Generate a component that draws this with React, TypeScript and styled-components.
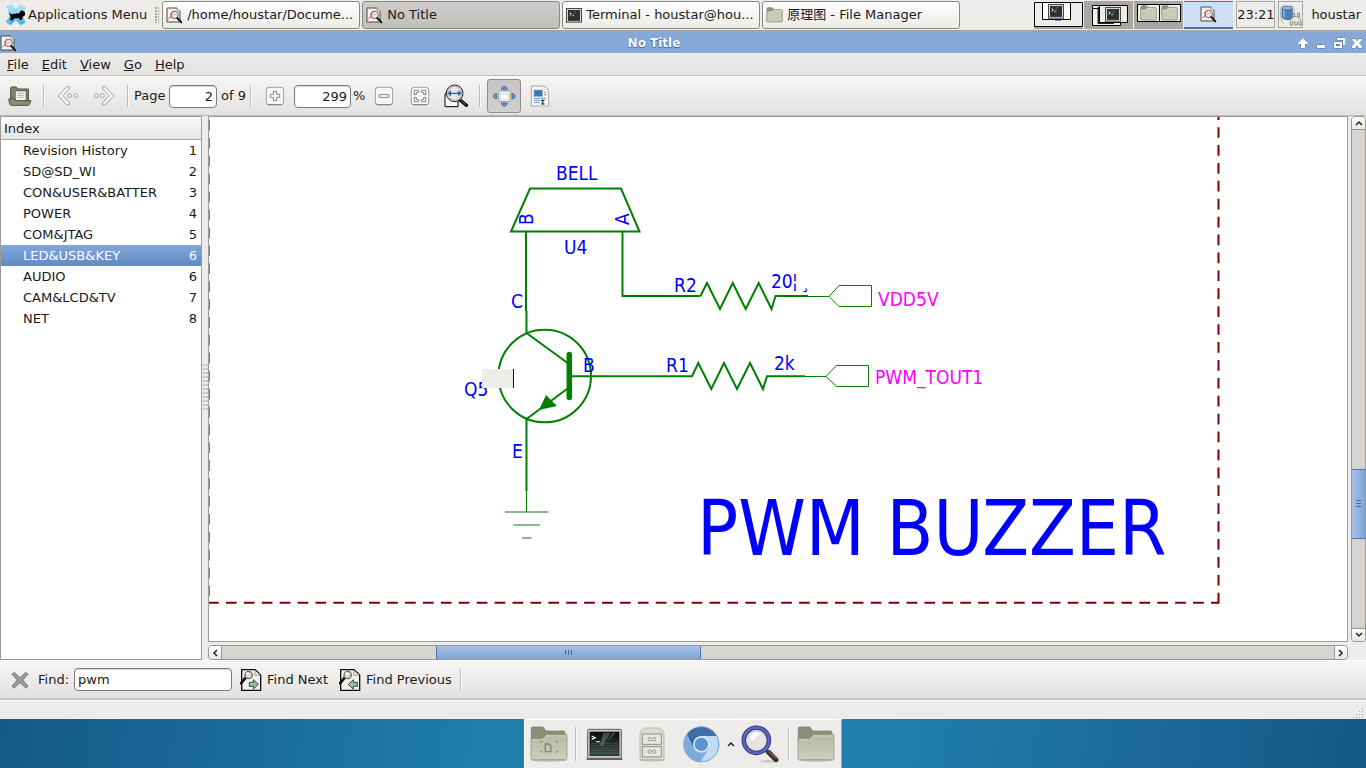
import React from 'react';
import styled, { createGlobalStyle, css } from 'styled-components';

const GlobalStyle = createGlobalStyle`
  *, *::before, *::after { box-sizing: border-box; }
  body { margin: 0; }
  body, button, input, table {
    font-family: "DejaVu Sans", "Noto Sans CJK SC", sans-serif;
    font-size: 13px;
    line-height: 16px;
    color: #1a1a1a;
  }
  button { padding: 0; border: 0; background: none; }
  svg { display: block; flex: none; }
`;

/* ---------- shared ---------- */

const Page = styled.div`
  display: flex;
  flex-direction: column;
  min-height: 100vh;
  background: #edeceb;
`;

const Spacer = styled.div`
  flex: 1;
`;

/* ---------- top panel ---------- */

const Panel = styled.header`
  display: flex;
  height: 31px;
  padding: 1px 5px 0;
  border-bottom: 1px solid #a9a39d;
  background: #edeceb;
`;

const MenuLauncher = styled.button`
  display: flex;
  align-items: center;
  gap: 2px;
  height: 28px;
  margin-right: 8px;
  white-space: nowrap;
`;

const PanelHandle = styled.div`
  width: 4px;
  height: 16px;
  margin: 6px 3px 0 0;
  background-image: radial-gradient(circle at 1px 1px, #aaa8a5 1px, transparent 1px);
  background-size: 3px 3px;
`;

const TaskList = styled.nav`
  display: flex;
  flex: 0 1 798px;
  gap: 2px;
  min-width: 0;
`;

const Task = styled.button<{ $active?: boolean }>`
  display: flex;
  align-items: center;
  gap: 4px;
  flex: 1 1 0;
  min-width: 0;
  height: 28px;
  padding: 0 3px;
  border: 1px solid #8c8a87;
  border-radius: 3px;
  white-space: nowrap;
  overflow: hidden;
  background: ${p => (p.$active ? 'linear-gradient(#cfcdcb, #c2c0be)' : 'linear-gradient(#ffffff, #ecebea)')};
`;

const Pager = styled.div`
  display: flex;
  gap: 1px;
`;

const Workspace = styled.button<{ $current?: boolean; $first?: boolean }>`
  display: flex;
  align-items: center;
  justify-content: center;
  width: 49px;
  height: 28px;
  background: ${p => (p.$current ? '#cfe0f6' : p.$first ? '#edeceb' : '#a9a5a2')};
  ${p => p.$current && css`border-bottom: 2px solid #4a73ad; border-top: 1px solid #4a73ad;`}
`;

const Inset = styled.div<{ $width: number }>`
  display: flex;
  align-items: center;
  justify-content: center;
  width: ${p => p.$width}px;
  height: 27px;
  margin-left: 3px;
  border: 1px solid #a9a7a4;
`;

const UserButton = styled.button`
  height: 28px;
  margin-left: 8px;
`;

/* ---------- window frame ---------- */

const TitleBar = styled.div`
  display: flex;
  align-items: center;
  height: 22px;
  padding: 2px 3px 0 0;
  background: #86a9d8;
`;

const Title = styled.h1`
  flex: 1;
  margin: 0;
  padding-right: 6px;
  font-size: 12px;
  line-height: 20px;
  text-align: center;
  color: #fff;
  text-shadow: 0 0 1px #3f6198, 0 1px 1px #3f6198;
`;

const FrameButtons = styled.div`
  display: flex;
  gap: 6px;
`;

const MenuBar = styled.nav`
  display: flex;
  height: 23px;
  padding-left: 7px;
  gap: 13px;
  border-bottom: 1px solid #bfbebc;
  background: linear-gradient(#edeceb, #e4e3e1);
`;

const MenuItem = styled.button`
  height: 22px;
  padding-top: 2px;
  &::first-letter { text-decoration: underline; }
`;

const bar = css`
  display: flex;
  align-items: center;
  height: 40px;
  border-top: 1px solid #fff;
  border-bottom: 1px solid #bab9b7;
  background: linear-gradient(#f6f5f4, #e3e2e0);
`;

const Toolbar = styled.div`
  ${bar}
  padding-left: 2px;
`;

const ToolButton = styled.button<{ $pressed?: boolean }>`
  display: flex;
  align-items: center;
  justify-content: center;
  width: 34px;
  height: 34px;
  margin: 0 1px;
  border: 1px solid ${p => (p.$pressed ? '#8f8c89' : 'transparent')};
  border-radius: 3px;
  background: ${p => (p.$pressed ? 'linear-gradient(#c8c4c1, #d2cfcc)' : 'none')};
`;

const Separator = styled.div<{ $height: number }>`
  flex: none;
  width: 2px;
  height: ${p => p.$height}px;
  margin: 0 5px;
  border-left: 1px solid #bebcba;
  border-right: 1px solid #fbfbfa;
`;

const Field = styled.input<{ $width: number; $right?: boolean }>`
  width: ${p => p.$width}px;
  height: 23px;
  padding: 0 3px;
  border: 1px solid #7f7b78;
  border-radius: 4px;
  outline: 0;
  background: #fff;
  box-shadow: inset 0 1px 1px #d8d6d4;
  text-align: ${p => (p.$right ? 'right' : 'left')};
`;

const PageLabel = styled.label`
  width: 35px;
`;

const PageCount = styled.span`
  width: 28px;
  padding-left: 4px;
  white-space: nowrap;
`;

const Percent = styled.label`
  width: 15px;
  padding-left: 2px;
`;

const ZoomField = styled(Field)`
  margin-left: 1px;
`;

/* ---------- work area ---------- */

const Work = styled.main`
  display: grid;
  grid-template-columns: 202px 6px minmax(0, 1fr) 18px;
  grid-template-rows: minmax(300px, 1fr) 18px;
  flex: 1;
`;

const Sidebar = styled.aside`
  grid-row: 1 / 3;
  border: 1px solid #9f9b98;
  background: #fff;
`;

const Outline = styled.table`
  width: 100%;
  border-collapse: separate;
  border-spacing: 0;
  th, td { padding: 0; font-weight: normal; text-align: left; }
  th {
    height: 23px;
    padding: 1px 0 0 3px;
    border-bottom: 1px solid #a8a6a4;
    background: linear-gradient(#fbfbfa, #f0efee 50%, #e6e5e3);
  }
  td { height: 21px; padding-left: 22px; }
  td:last-child { width: 40px; padding: 0 4px 0 0; text-align: right; }
`;

const OutlineRow = styled.tr<{ $selected?: boolean }>`
  ${p => p.$selected && css`
    background: linear-gradient(#83a7da, #5f8ac4);
    color: #fff;
  `}
`;

const Divider = styled.div`
  grid-row: 1 / 3;
  display: flex;
  align-items: center;
  justify-content: center;
  &::before {
    content: "";
    width: 5px;
    height: 48px;
    background-image: radial-gradient(circle at 1px 1px, #c4c2bf 1px, transparent 1px);
    background-size: 3px 4px;
  }
`;

const Document = styled.section`
  min-width: 0;
  border: 1px solid #9f9b98;
  background: #fff;
  overflow: hidden;
`;

const Scroll = styled.div<{ $vertical?: boolean }>`
  display: flex;
  flex-direction: ${p => (p.$vertical ? 'column' : 'row')};
  margin: ${p => (p.$vertical ? '0 0 0 3px' : '3px 0 0')};
  border: 1px solid #989592;
  border-radius: 4px;
  background: #d5d4d1;
  overflow: hidden;
`;

const ScrollArrow = styled.button<{ $side: string }>`
  display: flex;
  align-items: center;
  justify-content: center;
  width: 13px;
  height: 13px;
  background: linear-gradient(#fff, #e9e8e6);
  border-${p => p.$side}: 1px solid #989592;
`;

const Track = styled.div<{ $grow: number }>`
  flex: ${p => p.$grow} 1 0;
`;

const Thumb = styled.div<{ $vertical?: boolean; $grow: number }>`
  flex: ${p => p.$grow} 1 0;
  display: flex;
  align-items: center;
  justify-content: center;
  outline: 1px solid #5278ae;
  background: linear-gradient(${p => (p.$vertical ? '90deg' : '180deg')}, #a6c4ea, #7da3d6);
  &::before {
    content: "";
    width: 5px;
    height: 7px;
    ${p => p.$vertical
      ? 'background: repeating-linear-gradient(#47689a 0 1px, transparent 1px 3px);'
      : 'width: 7px; height: 5px; background: repeating-linear-gradient(90deg, #47689a 0 1px, transparent 1px 3px);'}
  }
`;

/* ---------- find bar, status bar, desktop ---------- */

const FindBar = styled.form`
  ${bar}
  border-bottom: 2px solid #c2c1bf;
  padding-left: 11px;
`;

const FindLabel = styled.label`
  width: 36px;
  margin-left: 9px;
`;

const FindButton = styled.button`
  display: flex;
  align-items: center;
  gap: 5px;
  height: 32px;
  margin-left: 8px;
  margin-right: 3px;
  white-space: nowrap;
`;

const StatusBar = styled.footer`
  display: flex;
  justify-content: flex-end;
  align-items: flex-end;
  height: 19px;
  padding: 0 1px 1px;
  border-top: 1px solid #fff;
`;

const Desktop = styled.div`
  display: flex;
  justify-content: center;
  height: 49px;
  background: linear-gradient(100deg, #145a87, #207dac 36%, #217fae 64%, #1a6594 88%, #135885);
`;

const Dock = styled.nav`
  display: flex;
  align-items: center;
  width: 318px;
  padding-left: 5px;
  border: 1px solid #fff;
  border-bottom: 0;
  border-right-color: #8fa9b5;
  background: #edeceb;
`;

const DockSeparator = styled(Separator)`
  margin: 0 7px;
`;

const DockButton = styled.button<{ $width: number }>`
  display: flex;
  align-items: center;
  justify-content: center;
  width: ${p => p.$width}px;
  height: 48px;
`;

/* ---------- icons ---------- */

const XfceIcon = () => (
  <svg width="21" height="22" viewBox="0 0 63 66">
    <defs>
      <linearGradient id="xf" x1="0" y1="0" x2="0" y2="1">
        <stop offset="0" stopColor="#b9ebfa" /><stop offset="1" stopColor="#37b3e6" />
      </linearGradient>
    </defs>
    <path d="M6 8 L20 4 L32 18 L46 3 L61 11 L48 32 L62 54 L48 64 L32 48 L18 64 L3 54 L17 32Z" fill="url(#xf)" stroke="#74c6e4" strokeWidth="2" />
    <path d="M10 24 L18 31 L42 28 L50 18 L53 22 L58 21 L61 32 L54 38 L50 48 L44 48 L43 43 L28 43 L22 50 L15 48 L17 38 Z" fill="#050505" />
  </svg>
);

const DocIcon = () => (
  <svg width="17" height="17" viewBox="0 0 51 51">
    <path d="M3 3 H33 L42 12 V45 H3Z" fill="#f4f3f2" stroke="#4a4745" strokeWidth="3" />
    <path d="M33 3 V12 H42" fill="#fff" stroke="#777" strokeWidth="2" />
    <path d="M8 35 L15 30 L20 12 M12 22 L20 18" stroke="#e23a3a" strokeWidth="3" fill="none" />
    <circle cx="26" cy="24" r="11" fill="#f3e9e8" fillOpacity=".85" stroke="#696562" strokeWidth="3" />
    <path d="M19 28 L25 21 L32 24" stroke="#ee7777" strokeWidth="2" fill="none" />
    <path d="M34 33 L46 46" stroke="#151515" strokeWidth="6" strokeLinecap="round" />
  </svg>
);

const TerminalIcon = () => (
  <svg width="16" height="15" viewBox="0 0 48 45">
    <rect x="1.5" y="1.5" width="45" height="41" fill="#d6d8d3" stroke="#454844" strokeWidth="3" />
    <rect x="7" y="7" width="34" height="30" fill="#2a302d" stroke="#151816" strokeWidth="2" />
    <path d="M24 8 L18 30 L33 8Z" fill="#5a615e" opacity=".6" />
    <path d="M11 14 L16 18 L11 22" stroke="#fff" strokeWidth="3" fill="none" />
    <path d="M18 23 H25" stroke="#ddd" strokeWidth="2" />
  </svg>
);

const SmallFolder = () => (
  <svg width="17" height="16" viewBox="0 0 51 48">
    <path d="M3 14 V6 Q3 2 7 2 H17 Q20 2 21 5 L23 9 H44 V14Z" fill="#8f927e" stroke="#74775f" strokeWidth="2" />
    <path d="M2 13 H16 L21 8 H47 Q49 8 49 11 V42 Q49 45 46 45 H5 Q2 45 2 42Z" fill="#c9cab7" stroke="#7f826c" strokeWidth="2" />
    <path d="M5 15 H17 L22 11 H46" stroke="#e8e9dd" strokeWidth="2" fill="none" />
  </svg>
);

const MiniDesk = ({ kind }: { kind: 'one' | 'two' | 'folders' }) => (
  <svg width="49" height="28" viewBox="0 0 49 28">
    {kind === 'one' && (
      <>
        <path d="M.5 1.5H48.5V25.5H.5Z" fill="#edeceb" stroke="#000" />
        <path d="M0 27H49" stroke="#a9a5a2" strokeWidth="2" />
        <path d="M8.5 1.5H36.5V18.5H8.5Z" fill="#fff" stroke="#000" />
        <path d="M21 19.5H27" stroke="#5b93dc" />
        <g transform="translate(14 3)"><TerminalIcon /></g>
      </>
    )}
    {kind === 'two' && (
      <>
        <path d="M8.500 4.500H36.500V24.500H8.500Z" fill="#f4f4f2" stroke="#000" />
        <path d="M8.500 7.500H14" stroke="#000" />
        <path d="M14.500 6V22H30" stroke="#222" strokeWidth="2" fill="none" />
        <path d="M15.500 4.500H43.500V21.500H15.500Z" fill="#edeceb" stroke="#000" />
        <g transform="translate(21 6)"><TerminalIcon /></g>
      </>
    )}
    {kind === 'folders' && (
      <>
        <path d="M3.5 3.5H46.5V20.5H3.5Z M25.5 3.5V20.5" fill="#edeceb" stroke="#000" />
        <g transform="translate(6 4)"><SmallFolder /></g>
        <g transform="translate(27 4)"><SmallFolder /></g>
      </>
    )}
  </svg>
);

const NetIcon = () => (
  <svg width="23" height="24" viewBox="0 0 69 72">
    <path d="M14 8 Q3 10 5 26 L5 44 Q7 59 15 62" fill="none" stroke="#b5b5b3" strokeWidth="3" />
    <path d="M34 8 Q46 10 47 26" fill="none" stroke="#b5b5b3" strokeWidth="3" />
    <path d="M9 15 V44 Q25 56 40 44 V15Z" fill="#527fb8" stroke="#2e578b" strokeWidth="2" />
    <path d="M15 19 V44" stroke="#8db0dc" strokeWidth="5" />
    <ellipse cx="24.500" cy="15" rx="15.500" ry="6" fill="#8fb2df" stroke="#2e578b" strokeWidth="2" />
    <g fill="#e8e8e6" stroke="#8b8b88" strokeWidth="3">
      <path d="M42 30 H47 V42 H42Z M56 30 H61 V42 H56Z" />
      <path d="M34 66 V56 Q36 41 52 40 Q66 42 67 66 H60 V57 H55 V66 H48 V57 H41 V66Z" />
    </g>
  </svg>
);

const frameGlyphs = {
  shade: 'M6 1 L1 6 V7 H4 V11 H8 V7 H11 V6Z',
  minimise: 'M2 8H10V11H2Z',
  restore: 'M4 1H12V8H10V3H4Z M1 5H9V11H1Z M3 7V9H7V7Z',
  close: 'M1 2H4L6 4L8 2H11V3L8 6L11 9V11H8L6 8L4 11H1V9L4 6L1 3Z',
};

const FrameGlyph = ({ d }: { d: string }) => (
  <svg width="12" height="12" viewBox="0 0 12 12">
    <path d={d} fill="#fff" fillRule="evenodd" stroke="#56779f" strokeWidth="1" paintOrder="stroke" />
  </svg>
);

const OpenIcon = () => (
  <svg width="24" height="20" viewBox="0 0 72 60">
    <path d="M8 44 V7 Q8 3 12 3 H25 L30 9 H61 V44Z" fill="#80806d" stroke="#4f5042" strokeWidth="3" />
    <path d="M22 15 H54 V46 H22Z" fill="#f6f6f4" stroke="#5c5d50" strokeWidth="2" />
    <path d="M28 22 H48 M28 28 H48 M28 34 H48" stroke="#b4b4ae" strokeWidth="3" />
    <path d="M2 39 H18 L24 44 H69 L64 56 Q63 58 60 58 H10 Q7 58 6 56Z" fill="#8c8d79" stroke="#4f5042" strokeWidth="3" />
  </svg>
);

const ArrowIcon = ({ forward }: { forward?: boolean }) => (
  <svg width="22" height="20" viewBox="0 0 66 60">
    <g transform={forward ? 'translate(66 0) scale(-1 1)' : undefined} fill="#f3f2f1" stroke="#979593" strokeWidth="2.500">
      <path d="M29 2 H37 V9 L18 29 L37 50 V57 H30 L3 30Z" />
      <circle cx="38" cy="29" r="6" />
      <circle cx="56" cy="29" r="6" />
    </g>
  </svg>
);

const SquareIcon = ({ kind }: { kind: 'plus' | 'minus' | 'fit' }) => (
  <svg width="20" height="20" viewBox="0 0 60 60">
    <rect x="4" y="4" width="52" height="52" rx="8" fill="#f7f6f5" stroke="#a3a19f" strokeWidth="3" />
    <path d="M8 56 H52" stroke="#81807e" strokeWidth="3" />
    <g fill="#fff" stroke="#858381" strokeWidth="3">
      {kind === 'plus' && <path d="M25 16 H35 V25 H44 V34 H35 V44 H25 V34 H16 V25 H25Z" />}
      {kind === 'minus' && <path d="M15 26 H45 V34 H15Z" />}
      {kind === 'fit' && <path d="M13 13 H26 V19 H19 V26 H13Z M34 13 H47 V26 H41 V19 H34Z M13 34 H19 V41 H26 V47 H13Z M41 34 H47 V47 H34 V41 H41Z" />}
    </g>
  </svg>
);

const FitWidthIcon = () => (
  <svg width="24" height="24" viewBox="0 0 72 72">
    <path d="M3 68 V31 L12 18 H42 V68Z" fill="#fbfbfa" stroke="#000" strokeWidth="3" />
    <path d="M48 48 L67 64" stroke="#000" strokeWidth="10" strokeLinecap="round" />
    <path d="M50 49 L65 62" stroke="#777" strokeWidth="3" />
    <circle cx="32" cy="28" r="25" fill="#e4e6e6" stroke="#171717" strokeWidth="3" />
    <circle cx="32" cy="28" r="21" fill="none" stroke="#b9bdbd" strokeWidth="4" />
    <path d="M11 28 L21 19 V26 H43 V19 L53 28 L43 37 V30 H21 V37Z" fill="#2f5c92" />
  </svg>
);

const PanIcon = () => (
  <svg width="24" height="22" viewBox="0 0 72 66">
    <rect x="20" y="18" width="35" height="32" rx="4" fill="#f3f4f1" stroke="#999c92" strokeWidth="3" />
    <path d="M26 27 H49 V44 H26Z" fill="#fff" stroke="#c5c7bf" strokeWidth="2" />
    <g fill="#6993cb" stroke="#2f5b93" strokeWidth="2">
      <path d="M28 13 Q29 4 37 4 Q45 4 46 13Z" />
      <path d="M28 54 H46 Q44 64 37 64 Q30 64 28 54Z" />
      <path d="M14 25 V42 Q4 41 4 34 Q4 26 14 25Z" />
      <path d="M60 25 Q70 27 70 34 Q70 41 60 42Z" />
    </g>
  </svg>
);

const TextSelectIcon = () => (
  <svg width="20" height="22" viewBox="0 0 60 66">
    <path d="M4 3 H37 Q57 5 56 25 V63 H4Z" fill="#f5f5f4" stroke="#a8aaa8" strokeWidth="3" />
    <rect x="12" y="15" width="25" height="19" fill="#3e73ad" stroke="#8bb0d8" strokeWidth="2" />
    <path d="M42 22 H48 M42 29 H50 M12 40 H48 M12 46 H30 M12 52 H29" stroke="#689aca" strokeWidth="3" />
    <rect x="30" y="43" width="17" height="18" fill="#fff" />
    <path d="M33 46 H44 M38.500 46 V57 M33 57 H44" stroke="#111" strokeWidth="3" />
  </svg>
);

const CloseIcon = () => (
  <svg width="18" height="18" viewBox="0 0 54 54">
    <path d="M9 4 L27 20 L45 4 L51 10 L35 27 L51 45 L45 51 L27 35 L9 51 L3 45 L19 27 L3 10Z" fill="#9a9c98" stroke="#777975" strokeWidth="3" strokeLinejoin="round" />
  </svg>
);

const FindIcon = ({ back }: { back?: boolean }) => (
  <svg width="22" height="24" viewBox="0 0 66 72">
    <path d="M5 5 H45 L62 21 V67 H5Z" fill="#f1f1ef" stroke="#111" strokeWidth="4" />
    <path d="M44 6 V22 H61" fill="#e0e0dd" stroke="#8a8a87" strokeWidth="2" />
    <path d="M17 29 L3 46" stroke="#111" strokeWidth="8" strokeLinecap="round" />
    <circle cx="26" cy="21" r="11" fill="#ddd9ce" stroke="#6d6b63" strokeWidth="4" />
    <circle cx="23" cy="17" r="4" fill="#fff" />
    <path transform={back ? 'translate(83 0) scale(-1 1)' : undefined} d="M28 43 H40 V35 L55 49 L40 63 V55 H28Z" fill="#9cbd9f" stroke="#304f35" strokeWidth="3" />
  </svg>
);

const Chevron = ({ turn = 0 }: { turn?: number }) => (
  <svg width="8" height="8" viewBox="0 0 8 8">
    <path d="M1 6 L4 3 L7 6" transform={`rotate(${turn} 4 4)`} fill="none" stroke="#222" strokeWidth="1.500" />
  </svg>
);

const BigFolder = ({ documents }: { documents?: boolean }) => (
  <svg width="38" height="36" viewBox="0 0 114 108">
    <defs>
      <linearGradient id="folder" x1="0" y1="0" x2="0" y2="1">
        <stop offset="0" stopColor="#b6b8a1" /><stop offset="1" stopColor="#ced0bd" />
      </linearGradient>
    </defs>
    <ellipse cx="57" cy="103" rx="54" ry="4" fill="#bbb9b4" />
    <path d="M4 50 V7 Q4 3 8 3 H36 Q40 3 42 7 L47 15 H100 Q105 15 105 20 V50Z" fill="#8c8f78" stroke="#73765f" strokeWidth="2" />
    <path d="M3 38 H35 Q39 38 42 34 L46 28 Q48 25 52 25 H107 Q111 25 111 29 V97 Q111 101 107 101 H7 Q3 101 3 97Z" fill="url(#folder)" stroke="#868970" strokeWidth="2" />
    <path d="M6 41 H36 Q41 41 45 36 L49 30 H108" stroke="#daddcd" strokeWidth="2" fill="none" />
    {documents && (
      <g fill="none" stroke="#84876f" strokeWidth="3">
        <path d="M46 54 H56 L63 61 V77 H46Z" strokeWidth="4" />
        <path d="M32 51 V46 H38 M77 46 H83 V51 M32 73 V78 H38 M77 78 H83 V73" />
      </g>
    )}
  </svg>
);

const BigTerminal = () => (
  <svg width="37" height="33" viewBox="0 0 111 99">
    <defs>
      <linearGradient id="screen" x1="0" y1="0" x2="0" y2="1">
        <stop offset="0" stopColor="#070a09" /><stop offset="1" stopColor="#3f504b" />
      </linearGradient>
    </defs>
    <path d="M2 91 H109 V96 H2Z" fill="#5c5e5b" />
    <rect x="5" y="4" width="101" height="87" rx="3" fill="#c9cbc8" stroke="#5e615d" strokeWidth="3" />
    <rect x="12" y="12" width="87" height="71" fill="url(#screen)" stroke="#111" strokeWidth="2" />
    <path d="M52 14 H74 L50 55 L42 52Z M79 14 H90 L62 42Z" fill="#8a9491" opacity=".45" />
    <path d="M14 46 H98 M14 53 H98 M14 60 H98 M14 67 H98 M14 74 H98" stroke="#65756f" strokeWidth="1" />
    <path d="M17 24 L27 29 L17 34" fill="none" stroke="#fff" strokeWidth="4" />
    <path d="M30 41 H42" stroke="#ddd" strokeWidth="3" />
  </svg>
);

const CabinetIcon = () => (
  <svg width="26" height="35" viewBox="0 0 78 105">
    <ellipse cx="39" cy="100" rx="38" ry="4" fill="#c5c4c0" />
    <path d="M3 18 Q4 13 8 10 L17 3 H61 L70 10 Q75 13 75 18 V98 H3Z" fill="#dcdcd8" stroke="#a3a39f" strokeWidth="2" />
    <g fill="#e6e6e3" stroke="#8f8f8b" strokeWidth="3">
      <rect x="10" y="21" width="57" height="31" />
      <rect x="10" y="59" width="57" height="31" />
    </g>
    <g fill="#fff" stroke="#8c8c88" strokeWidth="2.500">
      <path d="M28 32 V41 H49 V32 H43 V36 H34 V32Z" />
      <path d="M28 69 V78 H49 V69 H43 V73 H34 V69Z" />
    </g>
  </svg>
);

const ChromiumIcon = () => (
  <svg width="37" height="37" viewBox="0 0 111 111">
    <circle cx="55" cy="55" r="53" fill="#7fabdc" />
    <path d="M55 55 L12 24 A53 53 0 0 1 100 29Z" fill="#3f6fa8" />
    <path d="M55 30 H100 A53 53 0 0 1 52 108 L78 67Z" fill="#c1dbf3" />
    <path d="M12 24 L33 67 L55 55Z" fill="#33619b" />
    <circle cx="55" cy="55" r="25" fill="#dceaf8" />
    <circle cx="55" cy="55" r="20" fill="#5d93d3" />
    <circle cx="55" cy="55" r="53" fill="none" stroke="#6a94c4" strokeWidth="2" />
  </svg>
);

const MagnifierIcon = () => (
  <svg width="38" height="38" viewBox="0 0 114 114">
    <ellipse cx="83" cy="109" rx="26" ry="4" fill="#c8c6c3" />
    <path d="M71 73 L82 83" stroke="#a8a8a8" strokeWidth="9" />
    <path d="M83 82 L105 104" stroke="#3d3029" strokeWidth="15" strokeLinecap="round" />
    <path d="M84 80 L106 100" stroke="#806a59" strokeWidth="4" strokeLinecap="round" />
    <circle cx="46" cy="46" r="38" fill="#d9d7da" stroke="#2b2f7a" strokeWidth="13" />
    <circle cx="46" cy="46" r="38" fill="none" stroke="#5c66bd" strokeWidth="8" />
    <circle cx="47" cy="48" r="28" fill="#e6e4e3" />
    <path d="M29 38 Q34 20 51 22 Q60 24 53 31 Q43 35 40 45 Q31 49 29 38Z" fill="#fff" />
  </svg>
);

const Grip = () => (
  <svg width="12" height="11" viewBox="0 0 12 11">
    <path d="M9 1.500h1M6 4.500h1M9 4.500h1M3 7.500h1M6 7.500h1M9 7.500h1M0 10.500h1M3 10.500h1M6 10.500h1M9 10.500h1" stroke="#a5a3a0" strokeWidth="1" />
  </svg>
);

/* ---------- schematic ---------- */

const Sheet = styled.svg`
  width: 100%;
  height: 100%;
  text {
    font-family: "DejaVu Sans Condensed", "DejaVu Sans", sans-serif;
    font-size: 19px;
    fill: #0000ff;
  }
  .net { fill: #ff00ff; }
  .heading { font-size: 76px; }
  .wire { fill: none; stroke: #008000; stroke-width: 2; }
  .thin { fill: none; stroke: #008000; stroke-width: 1; }
  .border { fill: none; stroke: #800000; stroke-width: 2; stroke-dasharray: 10.7 7.21; }
`;

const Schematic = () => (
  <Sheet role="img" aria-label="PWM buzzer schematic">
    <g transform="translate(-209 -117)">
      <path className="border" d="M1218.500 603.500 V100" />
      <path className="border" strokeDashoffset="2.700" d="M1219 602.700 H200" />
      <path d="M209 120 V603" fill="none" stroke="#800000" strokeOpacity=".6" strokeWidth="2" strokeDasharray="10.700 7.210" />

      <path className="wire" d="M530 188.500 H621 L639.500 231.500 H511Z" />
      <path className="wire" d="M526 231 V311 M526.500 311 V333 M622.500 231 V296 H700.500" />
      <path className="wire" d="M700.500 296 L707 283 L720 309 L732.700 283 L745.700 309 L758.700 283 L771.500 309 L775.500 296 H808" />
      <path className="thin" d="M808 296.500 H829 L839 285.500 H871.500 V306.500 H839 L829 296.500" />
      <path className="wire" d="M570 376.300 H692 L698.300 363 L711.300 389 L724 363 L737 389 L750 363 L763 389 L767 376.300 H805" />
      <path className="thin" d="M805 376.500 H826 L836.500 365.500 H868.500 V386.500 H836.500 L826 376.500" />

      <circle className="wire" cx="544.700" cy="376" r="46.300" />
      <path className="wire" d="M526.500 333 L569 364 M569 387.500 L526.500 419 V491" />
      <path d="M569.300 354.500 V397.500" stroke="#008000" strokeWidth="5.500" strokeLinecap="round" />
      <path d="M546 395 L557 406 L539 410Z" fill="#008000" />
      <path className="thin" d="M526.500 491 V512 M505 512 H548.500 M513.500 525 H540 M522 538 H531.500" />

      <text x="556" y="180">BELL</text>
      <text x="564" y="254">U4</text>
      <text transform="translate(533 225) rotate(-90)">B</text>
      <text transform="translate(629 225) rotate(-90)">A</text>
      <text x="511" y="308">C</text>
      <text x="583" y="372">B</text>
      <text x="464" y="396">Q5</text>
      <text x="512" y="458">E</text>
      <text x="674" y="292">R2</text>
      <text x="666" y="372">R1</text>
      <text x="771" y="288">20</text>
      <text x="792" y="288">¦</text>
      <text x="801" y="288">¸</text>
      <text x="774" y="370">2k</text>
      <text className="net" x="878" y="306">VDD5V</text>
      <text className="net" x="875" y="384">PWM_TOUT1</text>
      <text className="heading" x="697" y="555">PWM BUZZER</text>

      <rect x="482" y="369" width="31" height="19" fill="#edeceb" />
      <path d="M513.500 369 V388" stroke="#000080" strokeWidth="1" />
    </g>
  </Sheet>
);

/* ---------- page ---------- */

const outline: [string, number][] = [
  ['Revision History', 1],
  ['SD@SD_WI', 2],
  ['CON&USER&BATTER', 3],
  ['POWER', 4],
  ['COM&JTAG', 5],
  ['LED&USB&KEY', 6],
  ['AUDIO', 6],
  ['CAM&LCD&TV', 7],
  ['NET', 8],
];

export default function App() {
  return (
    <Page>
      <GlobalStyle />
      <Panel>
        <MenuLauncher><XfceIcon />Applications Menu</MenuLauncher>
        <PanelHandle />
        <TaskList aria-label="Windows">
          <Task><DocIcon />/home/houstar/Docume...</Task>
          <Task $active><DocIcon />No Title</Task>
          <Task><TerminalIcon />Terminal - houstar@hou...</Task>
          <Task><SmallFolder />原理图 - File Manager</Task>
        </TaskList>
        <Spacer />
        <Pager>
          <Workspace $first aria-label="Workspace 1"><MiniDesk kind="one" /></Workspace>
          <Workspace aria-label="Workspace 2"><MiniDesk kind="two" /></Workspace>
          <Workspace aria-label="Workspace 3"><MiniDesk kind="folders" /></Workspace>
          <Workspace $current aria-label="Workspace 4"><DocIcon /></Workspace>
        </Pager>
        <Inset $width={39}>23:21</Inset>
        <Inset $width={25}><NetIcon /></Inset>
        <UserButton>houstar</UserButton>
      </Panel>

      <TitleBar>
        <DocIcon />
        <Title>No Title</Title>
        <FrameButtons>
          <button aria-label="Shade"><FrameGlyph d={frameGlyphs.shade} /></button>
          <button aria-label="Minimise"><FrameGlyph d={frameGlyphs.minimise} /></button>
          <button aria-label="Restore"><FrameGlyph d={frameGlyphs.restore} /></button>
          <button aria-label="Close"><FrameGlyph d={frameGlyphs.close} /></button>
        </FrameButtons>
      </TitleBar>

      <MenuBar>
        {['File', 'Edit', 'View', 'Go', 'Help'].map(m => <MenuItem key={m}>{m}</MenuItem>)}
      </MenuBar>

      <Toolbar>
        <ToolButton aria-label="Open"><OpenIcon /></ToolButton>
        <Separator $height={22} />
        <ToolButton aria-label="Back"><ArrowIcon /></ToolButton>
        <ToolButton aria-label="Forward"><ArrowIcon forward /></ToolButton>
        <Separator $height={22} />
        <PageLabel htmlFor="page">Page</PageLabel>
        <Field id="page" $width={48} $right defaultValue="2" />
        <PageCount>of 9</PageCount>
        <Separator $height={22} />
        <ToolButton aria-label="Zoom in"><SquareIcon kind="plus" /></ToolButton>
        <ZoomField id="zoom" $width={57} $right defaultValue="299" />
        <Percent htmlFor="zoom">%</Percent>
        <ToolButton aria-label="Zoom out"><SquareIcon kind="minus" /></ToolButton>
        <ToolButton aria-label="Zoom to fit"><SquareIcon kind="fit" /></ToolButton>
        <ToolButton aria-label="Zoom to width"><FitWidthIcon /></ToolButton>
        <Separator $height={22} />
        <ToolButton $pressed aria-label="Pan"><PanIcon /></ToolButton>
        <ToolButton aria-label="Select text"><TextSelectIcon /></ToolButton>
      </Toolbar>

      <Work>
        <Sidebar>
          <Outline>
            <thead><tr><th colSpan={2}>Index</th></tr></thead>
            <tbody>
              {outline.map(([name, page]) => (
                <OutlineRow key={name} $selected={name === 'LED&USB&KEY'}>
                  <td>{name}</td>
                  <td>{page}</td>
                </OutlineRow>
              ))}
            </tbody>
          </Outline>
        </Sidebar>
        <Divider />
        <Document><Schematic /></Document>
        <Scroll $vertical>
          <ScrollArrow $side="bottom" aria-label="Scroll up"><Chevron /></ScrollArrow>
          <Track $grow={339} />
          <Thumb $vertical $grow={67} />
          <Track $grow={90} />
          <ScrollArrow $side="top" aria-label="Scroll down"><Chevron turn={180} /></ScrollArrow>
        </Scroll>
        <Scroll>
          <ScrollArrow $side="right" aria-label="Scroll left"><Chevron turn={270} /></ScrollArrow>
          <Track $grow={215} />
          <Thumb $grow={263} />
          <Track $grow={633} />
          <ScrollArrow $side="left" aria-label="Scroll right"><Chevron turn={90} /></ScrollArrow>
        </Scroll>
      </Work>

      <FindBar onSubmit={e => e.preventDefault()}>
        <button type="button" aria-label="Close find bar"><CloseIcon /></button>
        <FindLabel htmlFor="find">Find:</FindLabel>
        <Field id="find" $width={158} defaultValue="pwm" />
        <FindButton type="button"><FindIcon />Find Next</FindButton>
        <FindButton type="button"><FindIcon back />Find Previous</FindButton>
        <Separator $height={22} />
      </FindBar>
      <StatusBar><Grip /></StatusBar>

      <Desktop>
        <Dock aria-label="Launchers">
          <DockButton $width={38} aria-label="Documents"><BigFolder documents /></DockButton>
          <DockSeparator $height={34} />
          <DockButton $width={40} aria-label="Terminal"><BigTerminal /></DockButton>
          <DockButton $width={56} aria-label="File manager"><CabinetIcon /></DockButton>
          <DockButton $width={42} aria-label="Web browser"><ChromiumIcon /></DockButton>
          <DockButton $width={17} aria-label="More browsers"><Chevron /></DockButton>
          <DockButton $width={42} aria-label="Application finder"><MagnifierIcon /></DockButton>
          <DockSeparator $height={34} />
          <DockButton $width={38} aria-label="Home folder"><BigFolder /></DockButton>
        </Dock>
      </Desktop>
    </Page>
  );
}
